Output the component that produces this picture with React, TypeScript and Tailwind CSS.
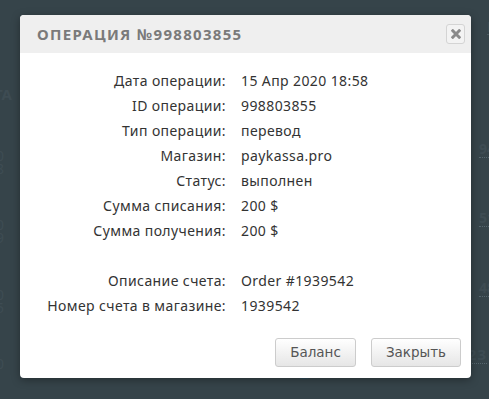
import React from "react";

const rows: [string, string][] = [
  ["Дата операции:", "15 Апр 2020 18:58"],
  ["ID операции:", "998803855"],
  ["Тип операции:", "перевод"],
  ["Магазин:", "paykassa.pro"],
  ["Статус:", "выполнен"],
  ["Сумма списания:", "200 $"],
  ["Сумма получения:", "200 $"],
  ["", ""],
  ["Описание счета:", "Order #1939542"],
  ["Номер счета в магазине:", "1939542"],
];

const bgRows: [string, string, string][] = [
  ["0", "8", "94"],
  ["0", "9", "51"],
  ["0", "5", "48"],
];

function Background() {
  return (
    <div className="flex flex-col h-full text-[#3e4c53] text-[14px] font-bold">
      <div className="flex justify-between h-[130px] items-start">
        <div className="mt-[83px] ml-[-6px] text-[15px]">ТА</div>
        <div className="mt-[20px] mr-[-8px] font-normal border-b border-dotted border-[#4a5a61] leading-[14px]">П</div>
      </div>
      {bgRows.map(([a, b, n], i) => (
        <div key={i} className="flex justify-between items-start h-[75px]">
          <div className="mt-[28px] ml-[-4px] flex flex-col leading-[13px] font-normal text-[14px]">
            <span>{a}</span>
            <span>{b}</span>
          </div>
          <div className="mt-[20px] mr-[-6px] border-b border-dotted border-[#56666e] leading-[16px]">{n}</div>
        </div>
      ))}
      <div className="flex items-start h-[75px]">
        <div className="mt-[24px] ml-[-4px] w-[71px] font-normal">0</div>
        <div className="mt-[18px] w-[106px]">+ 0.05 $</div>
        <div className="mt-[18px] w-[114px]">- 3.92 $</div>
        <div className="mt-[16px] w-[34px] h-[34px] rounded-full bg-[#2e4a5c] flex items-center justify-center text-[#3c5869] text-[18px]">P</div>
        <div className="flex-1" />
        <div className="mt-[16px] mr-[2px] tracking-[1px] text-[15px] border-b border-dotted border-[#56666e] leading-[18px]">938275623</div>
      </div>
    </div>
  );
}

export default function App() {
  return (
    <div
      className="relative w-[489px] h-[399px] overflow-hidden bg-[#36444a]"
      style={{ fontFamily: "'Noto Sans', 'Open Sans', sans-serif" }}
    >
      <Background />
      <div className="absolute left-[20px] top-[15px] w-[451px] h-[363px] flex flex-col bg-white rounded-[4px] overflow-hidden shadow-[0_2px_8px_rgba(0,0,0,0.35)]">
        <div className="h-[38px] flex items-center justify-between bg-[#efefef] pl-[17px] pr-[6px]">
          <div className="text-[15px] font-bold tracking-[1.3px] text-[#7a7a7a]">
            ОПЕРАЦИЯ №998803855
          </div>
          <div className="w-[19px] h-[20px] flex items-center justify-center rounded-[3px] border border-[#d4d4d4] bg-[#f3f3f3]">
            <svg width="10" height="10" viewBox="0 0 10 10">
              <path d="M1.8 1.8 L8.2 8.2 M8.2 1.8 L1.8 8.2" stroke="#8a8a8a" strokeWidth="3" strokeLinecap="square" />
            </svg>
          </div>
        </div>
        <div className="flex flex-col pt-[15px]">
          {rows.map(([l, v], i) => (
            <div key={i} className="flex h-[25px] items-center text-[14px] tracking-[0.4px] text-[#333]">
              <div className="w-[206px] text-right">{l}</div>
              <div className="ml-[15px]">{v}</div>
            </div>
          ))}
        </div>
        <div
          className="flex justify-end gap-[15px] pr-[10px] mt-[20px]"
          style={{ fontFamily: "'DejaVu Sans', Verdana, sans-serif" }}
        >
          <button className="w-[81px] h-[29px] rounded-[3px] border border-[#cccccc] bg-gradient-to-b from-white to-[#e6e6e6] text-[13.5px] text-[#555]">
            Баланс
          </button>
          <button className="w-[90px] h-[29px] rounded-[3px] border border-[#cccccc] bg-gradient-to-b from-white to-[#e6e6e6] text-[13.5px] text-[#555]">
            Закрыть
          </button>
        </div>
      </div>
    </div>
  );
}
